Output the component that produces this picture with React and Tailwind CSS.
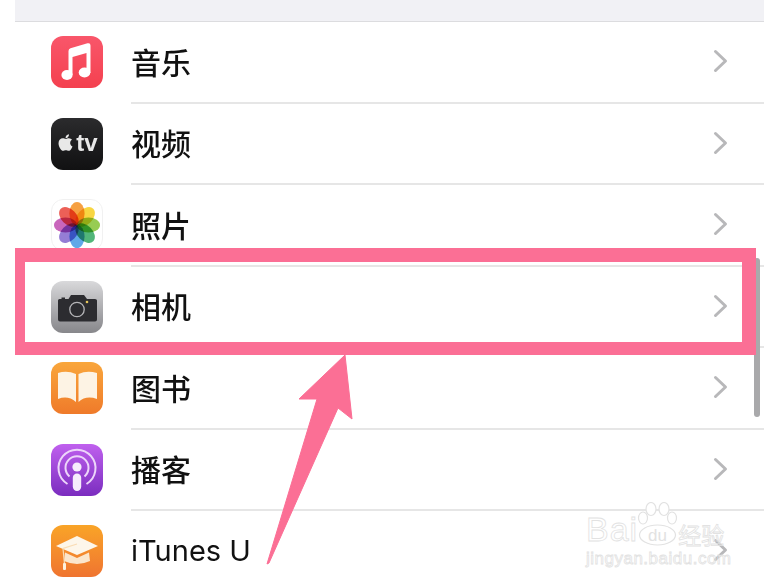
import React from 'react';
import { FaApple } from 'react-icons/fa';

const MusicIcon = () => (
  <div className="w-[52px] h-[52px] rounded-[12px] bg-gradient-to-b from-[#f9566a] to-[#f4404f] flex items-center justify-center">
    <svg width="52" height="52" viewBox="0 0 52 52">
      <path d="M17.5 15 Q17.5 13 19.5 12.3 L36.5 7.3 Q39.5 6.6 39.5 9.5 L39.5 37 L35.5 37 L35.5 17 L21.5 21 L21.5 39 L17.5 39 Z" fill="#fff" />
      <ellipse cx="16" cy="39" rx="5.6" ry="5" fill="#fff" />
      <ellipse cx="33.5" cy="36.5" rx="5.8" ry="5" fill="#fff" />
    </svg>
  </div>
);

const TvIcon = () => (
  <div className="w-[52px] h-[52px] rounded-[12px] bg-gradient-to-b from-[#2b2b2d] to-[#111112] flex items-center justify-center gap-px text-[#e8e8e8]">
    <FaApple className="text-[19px] -mt-[3px]" />
    <span className="text-[24px] leading-none font-bold font-['Liberation_Sans',sans-serif] -mt-[2px]">tv</span>
  </div>
);

const petals = ['#f5962c', '#f7d22e', '#8cc63f', '#3fae6a', '#4f9fe6', '#8a6fd0', '#c355b5', '#ea4f45'];

const PhotosIcon = () => (
  <div className="w-[52px] h-[52px] rounded-[12px] bg-white border border-[#f1f1f1] flex items-center justify-center">
    <svg width="46" height="46" viewBox="0 0 46 46">
      {petals.map((c, i) => (
        <ellipse
          key={c}
          cx="23"
          cy="11.5"
          rx="7.6"
          ry="11.5"
          fill={c}
          fillOpacity="0.9"
          style={{ mixBlendMode: 'multiply' }}
          transform={`rotate(${i * 45} 23 23)`}
        />
      ))}
    </svg>
  </div>
);

const CameraIcon = () => (
  <div className="w-[52px] h-[52px] rounded-[12px] bg-gradient-to-b from-[#d9d9db] to-[#87878b] flex items-center justify-center">
    <svg width="52" height="52" viewBox="0 0 52 52">
      <path d="M8.5 18 Q7 18 7 19.5 L7 38.5 Q7 40.5 9 40.5 L44 40.5 Q46 40.5 46 38.5 L46 19.5 Q46 18 44 18 L36 18 L33 14 L20 14 L17.5 18 L14 18 L14 16.5 L10.5 16.5 L10.5 18 Z" fill="#2c2c30" />
      <circle cx="26" cy="28.5" r="7.2" fill="none" stroke="#b5b5b8" strokeWidth="1.3" />
      <circle cx="36" cy="21" r="1.3" fill="#e6c65a" />
    </svg>
  </div>
);

const BookIcon = () => (
  <div className="w-[52px] h-[52px] rounded-[12px] bg-gradient-to-b from-[#f9a63c] to-[#ef7a2a] flex items-center justify-center">
    <svg width="52" height="52" viewBox="0 0 52 52">
      <path d="M7 11 Q16 8 25 12 L25 40 Q17 33 7 37 Z" fill="#fdf3e4" />
      <path d="M46 11 Q36 8 27.5 12 L27.5 40 Q35 33 46 37 Z" fill="#fdf3e4" />
    </svg>
  </div>
);

const PodcastIcon = () => (
  <div className="w-[52px] h-[52px] rounded-[12px] bg-gradient-to-b from-[#c060ee] to-[#7b2cbf] flex items-center justify-center">
    <svg width="52" height="52" viewBox="0 0 52 52" fill="none" stroke="#edd5fa">
      <path d="M16.5 40 A18.5 18.5 0 1 1 35.5 40" strokeWidth="2" />
      <path d="M18.5 32.5 A11.5 11.5 0 1 1 33.5 32.5" strokeWidth="2" />
      <circle cx="26" cy="23" r="4.6" fill="#f6ecfc" stroke="none" />
      <rect x="21.8" y="29.5" width="8.4" height="17.5" rx="4.2" fill="#f6ecfc" stroke="none" />
    </svg>
  </div>
);

const ItunesUIcon = () => (
  <div className="w-[52px] h-[52px] rounded-[12px] bg-gradient-to-b from-[#f9a427] to-[#ef7430] flex items-center justify-center">
    <svg width="52" height="52" viewBox="0 0 52 52">
      <path d="M26 11 L47 21 L26 30 L5 21 Z" fill="#fdf6ea" />
      <path d="M14 27.5 L26 33 L38 27.5 L39 36 Q26 42 13 36 Z" fill="#fbe6cc" />
      <path d="M26 19 L12 23.5 L13.5 39" fill="none" stroke="#f9dcb4" strokeWidth="1.2" />
      <rect x="12" y="38" width="3" height="7" rx="1" fill="#fdf0dc" />
    </svg>
  </div>
);

const rows = [
  { label: '音乐', Icon: MusicIcon },
  { label: '视频', Icon: TvIcon },
  { label: '照片', Icon: PhotosIcon },
  { label: '相机', Icon: CameraIcon },
  { label: '图书', Icon: BookIcon },
  { label: '播客', Icon: PodcastIcon },
  { label: 'iTunes U', Icon: ItunesUIcon, latin: true },
];

const Chevron = () => (
  <svg width="15" height="24" viewBox="0 0 15 24" fill="none" stroke="#b8b8ba" strokeWidth="3" strokeLinecap="round" strokeLinejoin="round">
    <path d="M2.5 2.5 L12.5 12 L2.5 21.5" />
  </svg>
);

const Watermark = () => (
  <div className="absolute left-[586px] top-[500px] flex flex-col text-transparent [-webkit-text-stroke:0.8px_#e2e2e2] pointer-events-none">
    <div className="flex items-end h-[46px]">
      <span className="text-[34px] leading-none font-['Liberation_Sans',sans-serif] tracking-[1px]">Bai</span>
      <svg width="41" height="44" viewBox="0 0 41 44" fill="#fff" stroke="#e2e2e2" strokeWidth="1.2" className="-ml-[1px]">
        <ellipse cx="6" cy="16" rx="4.5" ry="6" />
        <ellipse cx="14" cy="7" rx="5" ry="6.5" />
        <ellipse cx="27" cy="7" rx="5" ry="6.5" />
        <ellipse cx="35" cy="16" rx="4.5" ry="6" />
        <ellipse cx="20.5" cy="33" rx="18" ry="10" />
        <text x="20.5" y="39" textAnchor="middle" fontSize="17" fontFamily="Liberation Sans" fill="#e2e2e2" stroke="none">du</text>
      </svg>
      <span className="text-[23px] leading-none font-['Noto_Sans_CJK_SC',sans-serif] whitespace-nowrap">经验</span>
    </div>
    <span className="mt-[4px] text-[17px] leading-none font-['Liberation_Sans',sans-serif] tracking-[0.5px] whitespace-nowrap">jingyan.baidu.com</span>
  </div>
);

const App = () => {
  return (
    <div className="relative w-[764px] h-[582px] overflow-hidden bg-white">
      {/* Top band */}
      <div className="ml-[15px] h-[22px] bg-[#f1f1f5] border-b border-[#dcdcdf]"></div>

      {/* Settings list */}
      <div className="blur-[0.5px]">
        {rows.map(({ label, Icon, latin }) => (
          <div key={label} className="flex items-center h-[81.5px] pl-[51px]">
            <div className="-mt-[1px]">
              <Icon />
            </div>
            <div className="ml-[28px] flex-1 h-full flex items-center justify-between pr-[36px] pb-[1px] border-b-2 border-[#e6e6e6]">
              <span
                className={
                  latin
                    ? "text-[29px] text-[#111] font-['Inter',sans-serif] mt-[1px]"
                    : "text-[30px] text-[#111] font-medium font-['Noto_Sans_CJK_SC',sans-serif]"
                }
              >
                {label}
              </span>
              <Chevron />
            </div>
          </div>
        ))}
      </div>

      {/* Scroll indicator */}
      <div className="absolute left-[754px] top-[258px] w-[6px] h-[159px] rounded-full bg-[#a9a9ab]"></div>

      <Watermark />

      {/* Highlight box */}
      <div className="absolute left-[15px] top-[248px] w-[741px] h-[107px] border-t-[14px] border-b-[13px] border-l-[10px] border-r-[14px] border-[#fb6f95]"></div>

      {/* Arrow */}
      <svg className="absolute left-[260px] top-[350px]" width="100" height="220" viewBox="0 0 100 220">
        <path
          d="M85 5 L92 69 L78 58 L9 213 L7 214 L57 49 L39 49 Z"
          fill="#fb6f95"
          stroke="#fb6f95"
          strokeWidth="1"
          strokeLinejoin="round"
        />
      </svg>
    </div>
  );
};

export default App;
